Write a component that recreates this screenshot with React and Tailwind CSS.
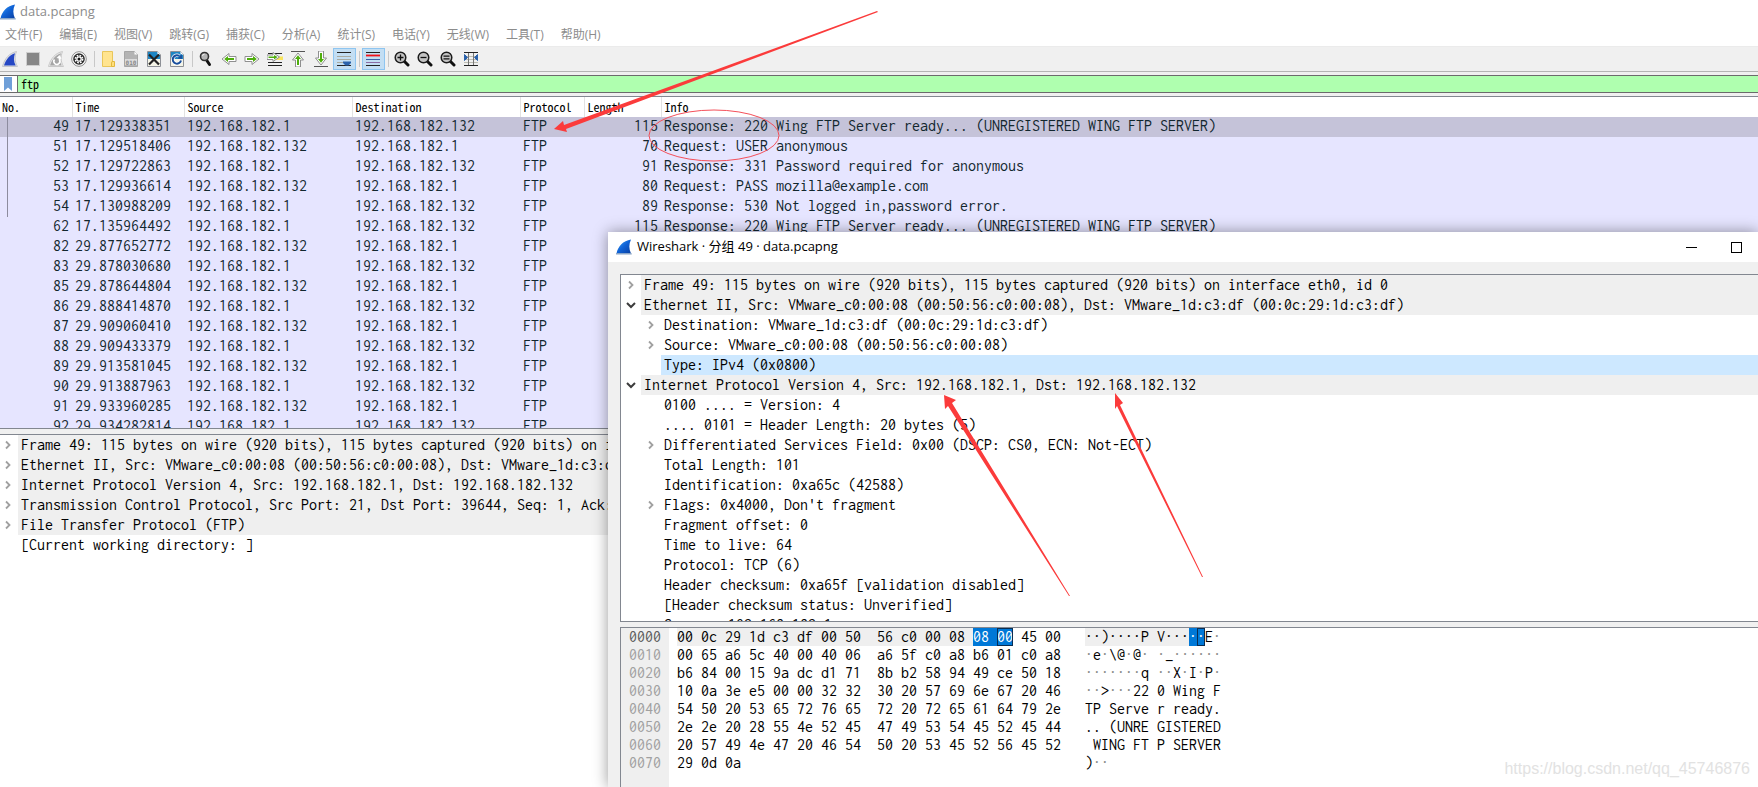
import clsx from 'clsx';

const menus = ['文件(F)', '编辑(E)', '视图(V)', '跳转(G)', '捕获(C)', '分析(A)', '统计(S)', '电话(Y)', '无线(W)', '工具(T)', '帮助(H)'];

const WING = 'Response: 220 Wing FTP Server ready... (UNREGISTERED WING FTP SERVER)';
const A = '192.168.182.1';
const B = '192.168.182.132';

const packets = [
  { no: 49, time: '17.129338351', src: A, dst: B, len: 115, info: WING },
  { no: 51, time: '17.129518406', src: B, dst: A, len: 70, info: 'Request: USER anonymous' },
  { no: 52, time: '17.129722863', src: A, dst: B, len: 91, info: 'Response: 331 Password required for anonymous' },
  { no: 53, time: '17.129936614', src: B, dst: A, len: 80, info: 'Request: PASS mozilla@example.com' },
  { no: 54, time: '17.130988209', src: A, dst: B, len: 89, info: 'Response: 530 Not logged in,password error.' },
  { no: 62, time: '17.135964492', src: A, dst: B, len: 115, info: WING },
  { no: 82, time: '29.877652772', src: B, dst: A },
  { no: 83, time: '29.878030680', src: A, dst: B },
  { no: 85, time: '29.878644804', src: B, dst: A },
  { no: 86, time: '29.888414870', src: A, dst: B },
  { no: 87, time: '29.909060410', src: B, dst: A },
  { no: 88, time: '29.909433379', src: A, dst: B },
  { no: 89, time: '29.913581045', src: B, dst: A },
  { no: 90, time: '29.913887963', src: A, dst: B },
  { no: 91, time: '29.933960285', src: B, dst: A },
  { no: 92, time: '29.934282814', src: A, dst: B },
];

const columns = [
  { label: 'No.', width: 'w-[72px]', pad: 'pl-0.5' },
  { label: 'Time', width: 'w-28', pad: 'pl-[3px]' },
  { label: 'Source', width: 'w-[168px]', pad: 'pl-[3px]' },
  { label: 'Destination', width: 'w-[168px]', pad: 'pl-[3px]' },
  { label: 'Protocol', width: 'w-16', pad: 'pl-[3px]' },
  { label: 'Length', width: 'w-[77px]', pad: 'pl-[3px]' },
  { label: 'Info', width: 'w-auto', pad: 'pl-[3px]' },
];

const FRAME = 'Frame 49: 115 bytes on wire (920 bits), 115 bytes captured (920 bits) on interface eth0, id 0';
const ETH = 'Ethernet II, Src: VMware_c0:00:08 (00:50:56:c0:00:08), Dst: VMware_1d:c3:df (00:0c:29:1d:c3:df)';
const IP = 'Internet Protocol Version 4, Src: 192.168.182.1, Dst: 192.168.182.132';

const mainTree = [
  { text: FRAME, head: true, arrow: 'right' },
  { text: ETH, head: true, arrow: 'right' },
  { text: IP, head: true, arrow: 'right' },
  { text: 'Transmission Control Protocol, Src Port: 21, Dst Port: 39644, Seq: 1, Ack: 1, Len: 61', head: true, arrow: 'right' },
  { text: 'File Transfer Protocol (FTP)', head: true, arrow: 'right' },
  { text: '[Current working directory: ]' },
];

const dialogTree = [
  { text: FRAME, head: true, arrow: 'right' },
  { text: ETH, head: true, arrow: 'down' },
  { text: 'Destination: VMware_1d:c3:df (00:0c:29:1d:c3:df)', child: true, arrow: 'right' },
  { text: 'Source: VMware_c0:00:08 (00:50:56:c0:00:08)', child: true, arrow: 'right' },
  { text: 'Type: IPv4 (0x0800)', child: true, selected: true },
  { text: IP, head: true, arrow: 'down' },
  { text: '0100 .... = Version: 4', child: true },
  { text: '.... 0101 = Header Length: 20 bytes (5)', child: true },
  { text: 'Differentiated Services Field: 0x00 (DSCP: CS0, ECN: Not-ECT)', child: true, arrow: 'right' },
  { text: 'Total Length: 101', child: true },
  { text: 'Identification: 0xa65c (42588)', child: true },
  { text: "Flags: 0x4000, Don't fragment", child: true, arrow: 'right' },
  { text: 'Fragment offset: 0', child: true },
  { text: 'Time to live: 64', child: true },
  { text: 'Protocol: TCP (6)', child: true },
  { text: 'Header checksum: 0xa65f [validation disabled]', child: true },
  { text: '[Header checksum status: Unverified]', child: true },
  { text: 'Source: 192.168.182.1', child: true },
];

const hexRows = [
  ['0010', '00 65 a6 5c 40 00 40 06  a6 5f c0 a8 b6 01 c0 a8', '·e·\\@·@· ·_······'],
  ['0020', 'b6 84 00 15 9a dc d1 71  8b b2 58 94 49 ce 50 18', '·······q ··X·I·P·'],
  ['0030', '10 0a 3e e5 00 00 32 32  30 20 57 69 6e 67 20 46', '··>···22 0 Wing F'],
  ['0040', '54 50 20 53 65 72 76 65  72 20 72 65 61 64 79 2e', 'TP Serve r ready.'],
  ['0050', '2e 2e 20 28 55 4e 52 45  47 49 53 54 45 52 45 44', '.. (UNRE GISTERED'],
  ['0060', '20 57 49 4e 47 20 46 54  50 20 53 45 52 56 45 52', ' WING FT P SERVER'],
  ['0070', '29 0d 0a', ')··'],
];

const Fin = ({ id, className }) => (
  <svg viewBox="0 0 16 16" className={className} aria-hidden="true">
    <defs>
      <linearGradient id={id} x1="0" y1="0" x2="1" y2="1">
        <stop offset="0" stopColor="#3fa4f5" />
        <stop offset="0.5" stopColor="#0f62d6" />
        <stop offset="1" stopColor="#0a3fa0" />
      </linearGradient>
    </defs>
    <path d="M0.500 14.500C2 7.500 7 1.800 15 0.600C12.800 5 12.800 10 15 14.500Z" fill={`url(#${id})`} />
    <path d="M0 14h15.500l.3 1.400H0Z" fill="#8aa6c8" />
  </svg>
);

const FileShape = ({ gray }) => (
  <>
    <path d="M1.500 .5H11.500L14.500 3.500V15.500H1.500Z" fill={gray ? '#b4b4b4' : '#f4f4e6'} stroke={gray ? '#a6a6a6' : '#8d9096'} />
    {!gray && <path d="M2 1H11.300L14 3.700V8H2Z" fill="#1d86c4" />}
    <path d="M11.500 .5V3.500H14.500Z" fill="#fff" />
  </>
);

const Lens = ({ children }) => (
  <>
    <path d="M10 10L14 14" stroke="#111" strokeWidth="3" strokeLinecap="round" />
    <circle cx="6.500" cy="6.500" r="5.300" fill="#c4c4c4" stroke="#1c1c1c" strokeWidth="1.500" />
    {children}
  </>
);

// one outlined green arrow, turned for each direction
const GreenArrow = ({ turn = 0 }) => (
  <g transform={`rotate(${turn} 8 8)`}>
    <path d="M1 5.500H8V2.500L15 8L8 13.500V10.500H1Z" fill="#fff" stroke="#8f8f8f" strokeLinejoin="round" />
    <path d="M3 7H9V5L12.800 8L9 11V9H3Z" fill="#4fae0c" />
  </g>
);

const tools = [
  {
    name: 'start',
    art: (
      <>
        <path d="M.5 15.500C2.500 7.500 7.500 2 14.500 .5C12.500 5.500 12.500 10.500 15.500 15.500Z" fill="#dfe2e8" stroke="#c4c6cc" />
        <path d="M2 14.500C4 8.500 7.500 4 13 2.200C11.500 6.500 11.500 10.500 13.700 14.500Z" fill="#2547c4" />
      </>
    ),
  },
  { name: 'stop', art: <rect x="1.500" y="1.500" width="13" height="13" fill="#878787" stroke="#cfcfcf" /> },
  {
    name: 'restart',
    art: (
      <>
        <path d="M.5 15.500C2.500 7.500 7.500 2 14.500 .5C12.500 5.500 12.500 10.500 15.500 15.500Z" fill="#ececec" stroke="#c8c8c8" />
        <path d="M2 14.500C4 8.500 7.500 4 13 2.200C11.500 6.500 11.500 10.500 13.700 14.500Z" fill="#a6a6a6" />
        <path d="M6.500 8.500A3 3 0 1 0 11.500 9V6" fill="none" stroke="#fff" strokeWidth="1.600" />
        <path d="M8.500 7L11.500 4L13.500 8Z" fill="#fff" />
      </>
    ),
  },
  {
    name: 'options',
    art: (
      <>
        <circle cx="8" cy="8" r="7.300" fill="#fff" stroke="#8c8c8c" />
        <circle cx="8" cy="8" r="5.800" fill="#2a2a2a" />
        <circle cx="8" cy="8" r="3.600" fill="none" stroke="#fff" strokeWidth="1.600" strokeDasharray="1.700 1.130" />
        <circle cx="8" cy="8" r="2.800" fill="#fff" />
        <circle cx="8" cy="8" r="1.500" fill="#111" />
      </>
    ),
  },
  null,
  {
    name: 'open',
    art: (
      <>
        <path d="M2.500 .5H12.500V15.500H2.500Z" fill="#ffe48f" stroke="#e9c65a" />
        <path d="M12 10.500H14.500V15.500H11.500V12Z" fill="#ffdf7d" stroke="#e2b93c" />
      </>
    ),
  },
  {
    name: 'save',
    art: (
      <>
        <FileShape gray />
        <path d="M2 8H14V14H2Z" fill="#dcdcdc" />
        <text x="8" y="13.500" textAnchor="middle" fill="#8a8a8a" className="font-['DejaVu_Sans_Mono',monospace] text-[6px] font-bold">010</text>
      </>
    ),
  },
  { name: 'close', art: <><FileShape /><path d="M3 3.500L13 13.500M13 3.500L3 13.500" stroke="#222" strokeWidth="2.200" /></> },
  {
    name: 'reload',
    art: (
      <>
        <FileShape />
        <path d="M12 9.500A4.200 4.200 0 1 1 10 4.800" fill="none" stroke="#fff" strokeWidth="3.400" />
        <path d="M12 9.500A4.200 4.200 0 1 1 10 4.800" fill="none" stroke="#1a4f9c" strokeWidth="2" />
        <path d="M8.500 7.500L13 8V3Z" fill="#1a4f9c" />
      </>
    ),
  },
  null,
  {
    name: 'find',
    art: (
      <>
        <path d="M8.500 9L11.500 13.500" stroke="#111" strokeWidth="3" strokeLinecap="round" />
        <circle cx="6.500" cy="5.500" r="4" fill="#b5b5b5" stroke="#333" strokeWidth="1.600" />
        <path d="M4.500 5A2 2 0 0 1 6.500 3.200" fill="none" stroke="#eee" />
      </>
    ),
  },
  { name: 'back', art: <GreenArrow turn={180} /> },
  { name: 'forward', art: <GreenArrow /> },
  {
    name: 'goto',
    art: (
      <>
        <path d="M1 2.500H15M1 11.500H15M1 14.500H15" stroke="#222" strokeWidth="1.200" />
        <path d="M8 5.500H16V9H8Z" fill="#f8e45c" />
        <path d="M0 4H6V1.500L12.500 6L6 10.500V8.500H0Z" fill="#fff" stroke="#8f8f8f" />
        <path d="M1.500 5.500H7V4L10.500 6L7 8.500V7H1.500Z" fill="#4fae0c" />
      </>
    ),
  },
  { name: 'first', art: <><path d="M1 .5H15" stroke="#555" strokeWidth="1" /><g transform="translate(0 1)"><GreenArrow turn={270} /></g></> },
  { name: 'last', art: <><g transform="translate(0 -1)"><GreenArrow turn={90} /></g><path d="M1 15.500H15" stroke="#555" strokeWidth="1" /></> },
  {
    name: 'autoscroll',
    active: true,
    art: (
      <>
        <path d="M1 1.500H15M1 14.500H15" stroke="#222" />
        <path d="M1 5.500H15M1 8.500H15M1 11.500H8" stroke="#a9aaa0" />
        <path d="M7 10.500H15V12L12.500 14.500H9.500L7 12Z" fill="#2b62ab" />
      </>
    ),
  },
  null,
  {
    name: 'colorize',
    active: true,
    art: (
      <>
        <path d="M1 1.500H15M1 14.500H15" stroke="#222" />
        <path d="M1 4.500H15" stroke="#f0101a" strokeWidth="1.800" />
        <path d="M1 8.500H15" stroke="#3a5fa8" />
        <path d="M1 11.500H15" stroke="#8a6ca4" />
      </>
    ),
  },
  null,
  { name: 'zoom in', art: <Lens><path d="M3.500 6.500H9.500M6.500 3.500V9.500" stroke="#111" strokeWidth="1.300" /></Lens> },
  { name: 'zoom out', art: <Lens><path d="M3.500 6.500H9.500" stroke="#111" strokeWidth="1.300" /></Lens> },
  { name: 'normal size', art: <Lens><path d="M3.500 5.200H9.500M3.500 7.800H9.500" stroke="#111" strokeWidth="1.200" /></Lens> },
  {
    name: 'resize columns',
    art: (
      <>
        <path d="M1 1.500H15M1 14.500H15" stroke="#222" />
        <path d="M1 5.500H15M1 8.500H15M1 11.500H15" stroke="#bdbdb4" />
        <path d="M5.500 2V14M10.500 2V14" stroke="#777" />
        <path d="M1.500 3.500L4.500 6.500L1.500 9.500ZM14.500 3.500L11.500 6.500L14.500 9.500Z" fill="#2b62ab" stroke="#2b62ab" />
      </>
    ),
  },
];

const Chevron = ({ dir }) => (
  <svg viewBox="0 0 10 10" className="size-2.5" aria-hidden="true">
    {dir === 'down'
      ? <path d="M1 3L5 7L9 3" fill="none" stroke="#3c3c3c" strokeWidth="2" />
      : <path d="M3 1.500L6.500 5L3 8.500" fill="none" stroke="#a0a0a0" strokeWidth="1.800" />}
  </svg>
);

const Tree = ({ rows }) => (
  <ul>
    {rows.map((r) => (
      <li key={r.text} className={clsx('flex h-5', r.child && 'pl-5')}>
        <span className="flex w-5 shrink-0 items-center justify-center">{r.arrow && <Chevron dir={r.arrow} />}</span>
        <span className={clsx('flex-1 overflow-hidden pl-[3px] whitespace-pre', r.head && 'bg-[#efefef]', r.selected && 'bg-[#cde8ff]')}>{r.text}</span>
      </li>
    ))}
  </ul>
);

// unprintable bytes are shown as grey dots
const Ascii = ({ text }) =>
  text.split(/(·+)/).map((part, i) => (
    <span key={i} className={part.startsWith('·') ? 'text-[#888888]' : ''}>{part}</span>
  ));

const HexDump = () => (
  <div className="flex flex-1 border-t border-l border-[#828790] bg-white text-base leading-[18px] whitespace-pre">
    <div className="w-12 bg-[#efefef] pl-2 text-[#a0a0a0]">
      <div className="text-[#5c5c5c]">0000</div>
      {hexRows.map(([off]) => <div key={off}>{off}</div>)}
    </div>
    <div className="w-[408px] pl-2">
      <div>
        <span className="inline-block bg-[#efefef]">{'00 0c 29 1d c3 df 00 50  56 c0 00 08 '}</span>
        <span className="inline-block bg-[#0078d7] text-white">{'08 '}</span>
        <span className="inline-block bg-[#0078d7] text-white outline-1 -outline-offset-1 outline-[#0a2d52]">00</span>
        {' 45 00'}
      </div>
      {hexRows.map(([off, hex]) => <div key={off}>{hex}</div>)}
    </div>
    <div className="pl-2">
      <div>
        <span className="inline-block bg-[#efefef]">{'··)····P V···'}</span>
        <span className="inline-block bg-[#0078d7] text-white">·</span>
        <span className="inline-block bg-[#0078d7] text-white outline-1 -outline-offset-1 outline-[#0a2d52]">·</span>
        E<span className="text-[#888888]">·</span>
      </div>
      {hexRows.map(([off, , text]) => <div key={off}><Ascii text={text} /></div>)}
    </div>
  </div>
);

const Toolbar = () => (
  <div className="flex h-[25px] shrink-0 border-b border-[#b4b4b4] bg-[#f0f0f0]">
    <div className="-ml-px flex items-center">
      {tools.map((t, i) =>
        t ? (
          <button key={t.name} aria-label={t.name} className={clsx('flex h-[22px] w-[23px] items-center', t.active ? 'border border-[#8ec5f0] bg-[#c3def3] pl-0.5' : 'pl-[3px]')}>
            <svg viewBox="0 0 16 16" className="size-4 shrink-0">{t.art}</svg>
          </button>
        ) : (
          <span key={i} className="flex w-1.5 justify-center"><span className="h-4 w-px bg-[#c8c8c8]" /></span>
        )
      )}
    </div>
  </div>
);

const PacketList = () => (
  <div className="min-h-0 flex-[332] overflow-hidden border-y border-[#828790] bg-white">
    <table className="w-full table-fixed border-collapse">
      <thead>
        <tr className="h-5 text-left font-['Noto_Sans_Mono_CJK_SC',monospace] text-xs text-black">
          {columns.map((c) => (
            <th key={c.label} className={clsx('border-r border-[#e2e2e2] p-0 font-normal last:border-r-0', c.width, c.pad)}>{c.label}</th>
          ))}
        </tr>
      </thead>
      <tbody className="text-base leading-[18px] whitespace-pre text-[#12272e]">
        {packets.map((p, i) => (
          <tr key={p.no} className={clsx('h-5 align-top', i === 0 ? 'bg-[#c5c3d9]' : 'bg-[#e6e5ff]')}>
            <td className="p-0">
              <div className={clsx('ml-[7px] h-5 pr-[3px] text-right', i < 5 && 'border-l border-[#8d8c9e]')}>{p.no}</div>
            </td>
            <td className="p-0 pl-[3px]">{p.time}</td>
            <td className="p-0 pl-[3px]">{p.src}</td>
            <td className="p-0 pl-[3px]">{p.dst}</td>
            <td className="p-0 pl-[3px]">FTP</td>
            <td className="p-0 pr-[3px] text-right">{p.len}</td>
            <td className="p-0 pl-[3px]">{p.info}</td>
          </tr>
        ))}
      </tbody>
    </table>
  </div>
);

const PacketDialog = () => (
  <section className="absolute top-[232px] right-0 bottom-0 left-[608px] flex flex-col bg-[#f0f0f0] text-black shadow-[0_0_14px_rgba(0,0,0,0.4)]">
    <header className="flex h-[30px] shrink-0 items-center bg-white pl-2 font-['Open_Sans','Noto_Sans_CJK_SC',sans-serif] text-[13px]">
      <Fin id="fin-dialog" className="size-4" />
      <h2 className="ml-[5px] flex-1">Wireshark · 分组 49 · data.pcapng</h2>
      <button aria-label="minimize" className="flex h-full w-[46px] items-center justify-center">
        <span className="h-px w-[11px] bg-black" />
      </button>
      <button aria-label="maximize" className="flex h-full w-11 items-center justify-center">
        <span className="size-[11px] border border-black" />
      </button>
    </header>
    <div className="flex min-h-0 flex-1 flex-col gap-[5px] pt-3 pl-3">
      <div className="min-h-0 flex-[346] overflow-hidden border-y border-l border-[#828790] bg-white text-base leading-5">
        <Tree rows={dialogTree} />
      </div>
      <div className="flex min-h-0 flex-[160] overflow-hidden">
        <HexDump />
      </div>
    </div>
  </section>
);

const Annotations = () => (
  <svg className="pointer-events-none absolute top-0 left-0 h-full w-full" aria-hidden="true">
    <g fill="#fb3b3b">
      <path d="M554 129L563 121L564 125L877 11L878 12L566 129L567 132Z" />
      <path d="M944 395L956 400L952 403L1070 596L1069 596L948 406L945 409Z" />
      <path d="M1115 393L1123 403L1120 405L1203 577L1202 577L1117 406L1115 409Z" />
    </g>
    <ellipse cx="714" cy="135.500" rx="65" ry="25.500" fill="none" stroke="#f4505a" strokeWidth="1" />
  </svg>
);

const App = () => (
  <div className="relative flex h-screen flex-col overflow-hidden bg-[#f0f0f0] font-[Inconsolata,'Noto_Sans_Mono_CJK_SC',monospace] text-black">
    <header className="flex h-[23px] shrink-0 items-center bg-white font-['Open_Sans',sans-serif] text-[13px] text-[#8c8c8c]">
      <Fin id="fin-main" className="size-4" />
      <h1 className="ml-1">data.pcapng</h1>
    </header>
    <nav className="flex h-6 shrink-0 items-center gap-[17px] border-b border-[#ebebeb] bg-white pl-[5px] font-['Open_Sans','Noto_Sans_CJK_SC',sans-serif] text-xs text-[#8c8c8c]">
      {menus.map((m) => <button key={m}>{m}</button>)}
    </nav>
    <Toolbar />
    <div className="mt-[3px] flex h-[18px] shrink-0 border-y border-[#6b6b6b] bg-[#afffaf]">
      <button aria-label="bookmark" className="flex w-[18px] items-center border-r border-[#6b6b6b] bg-white pl-[3px]">
        <svg viewBox="0 0 10 14" className="h-3.5 w-2.5"><path d="M1 0H9V14L5 10.500L1 14Z" fill="#6f9fd8" /></svg>
      </button>
      <input aria-label="filter" defaultValue="ftp" className="min-w-0 flex-1 bg-transparent pl-[3px] font-['Noto_Sans_Mono_CJK_SC',monospace] text-xs text-black outline-none" />
    </div>
    <div className="mt-[3px] flex min-h-0 flex-1 flex-col gap-[5px]">
      <PacketList />
      <div className="min-h-0 flex-[354] overflow-hidden border-t border-[#828790] bg-white text-base leading-5">
        <div className="-ml-0.5"><Tree rows={mainTree} /></div>
      </div>
    </div>
    <PacketDialog />
    <Annotations />
    <p className="absolute right-2 bottom-1.5 font-['Liberation_Sans',sans-serif] text-base text-[#e2e2e2]">https://blog.csdn.net/qq_45746876</p>
  </div>
);

export default App;
